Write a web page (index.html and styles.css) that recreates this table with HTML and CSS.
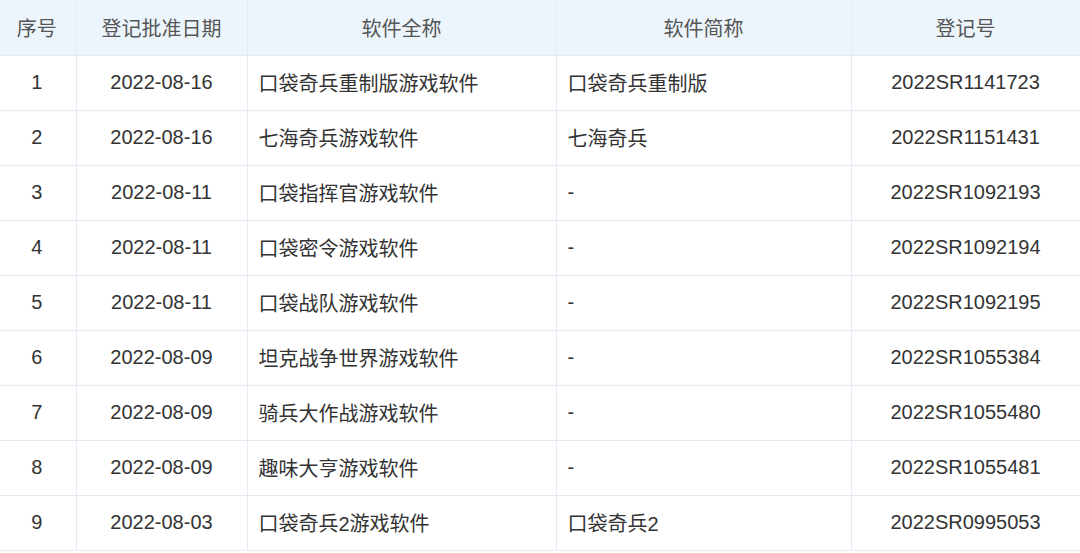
FILE: index.html
```html
<!DOCTYPE html>
<html lang="zh-CN">
<head>
<meta charset="utf-8">
<title>软件著作权登记</title>
<link rel="stylesheet" href="styles.css">
</head>
<body>
<table class="grid">
  <colgroup>
    <col class="c-no">
    <col class="c-date">
    <col class="c-full">
    <col class="c-short">
    <col class="c-reg">
  </colgroup>
  <thead>
    <tr>
      <th class="first">序号</th>
      <th>登记批准日期</th>
      <th>软件全称</th>
      <th>软件简称</th>
      <th>登记号</th>
    </tr>
  </thead>
  <tbody>
    <tr><td class="mid first">1</td><td class="mid">2022-08-16</td><td class="left">口袋奇兵重制版游戏软件</td><td class="left">口袋奇兵重制版</td><td class="mid">2022SR1141723</td></tr>
    <tr><td class="mid first">2</td><td class="mid">2022-08-16</td><td class="left">七海奇兵游戏软件</td><td class="left">七海奇兵</td><td class="mid">2022SR1151431</td></tr>
    <tr><td class="mid first">3</td><td class="mid">2022-08-11</td><td class="left">口袋指挥官游戏软件</td><td class="left">-</td><td class="mid">2022SR1092193</td></tr>
    <tr><td class="mid first">4</td><td class="mid">2022-08-11</td><td class="left">口袋密令游戏软件</td><td class="left">-</td><td class="mid">2022SR1092194</td></tr>
    <tr><td class="mid first">5</td><td class="mid">2022-08-11</td><td class="left">口袋战队游戏软件</td><td class="left">-</td><td class="mid">2022SR1092195</td></tr>
    <tr><td class="mid first">6</td><td class="mid">2022-08-09</td><td class="left">坦克战争世界游戏软件</td><td class="left">-</td><td class="mid">2022SR1055384</td></tr>
    <tr><td class="mid first">7</td><td class="mid">2022-08-09</td><td class="left">骑兵大作战游戏软件</td><td class="left">-</td><td class="mid">2022SR1055480</td></tr>
    <tr><td class="mid first">8</td><td class="mid">2022-08-09</td><td class="left">趣味大亨游戏软件</td><td class="left">-</td><td class="mid">2022SR1055481</td></tr>
    <tr><td class="mid first">9</td><td class="mid">2022-08-03</td><td class="left">口袋奇兵2游戏软件</td><td class="left">口袋奇兵2</td><td class="mid">2022SR0995053</td></tr>
  </tbody>
</table>
</body>
</html>
```
FILE: styles.css
```css
html, body {
  margin: 0;
  padding: 0;
  background: #ffffff;
}
body {
  font-family: "Liberation Sans", Arial, "Noto Sans CJK SC", sans-serif;
  font-size: 20px;
  color: #333333;
}
.grid {
  width: 1080px;
  border-collapse: collapse;
  table-layout: fixed;
}
.c-no { width: 76px; }
.c-date { width: 171px; }
.c-full { width: 309px; }
.c-short { width: 295px; }
.c-reg { width: 229px; }
.grid th,
.grid td {
  height: 55px;
  padding: 0 11px;
  border-left: 1px solid #e3ebf4;
  border-right: 1px solid #e3ebf4;
  border-bottom: 1px solid #e3ebf4;
  white-space: nowrap;
  box-sizing: border-box;
}
.grid th:first-child,
.grid td:first-child {
  border-left: none;
}
.grid .first {
  padding: 0 12px 0 10px;
}
.grid th {
  background: #edf5fc;
  font-weight: normal;
  color: #555555;
  text-align: center;
}
.mid { text-align: center; }
.left { text-align: left; }
```
